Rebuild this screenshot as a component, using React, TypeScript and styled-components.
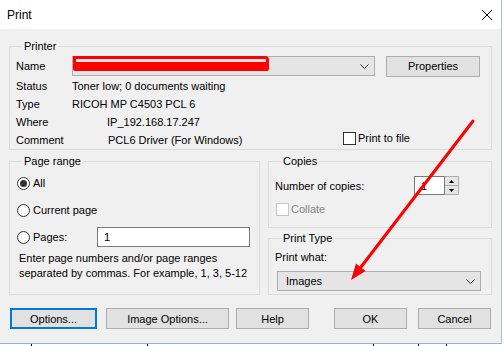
import React from "react";
import styled, { createGlobalStyle } from "styled-components";

const GlobalStyle = createGlobalStyle`
  html, body {
    margin: 0;
    padding: 0;
    background: #fff;
  }
  body {
    font-family: "Liberation Sans", Arial, sans-serif;
    font-size: 11px;
    color: #000;
  }
`;

const Page = styled.div`
  position: relative;
  width: 504px;
  height: 346px;
  overflow: hidden;
`;

const Window = styled.div`
  width: 501px;
  height: 343px;
  border-right: 1px solid #a8bfd8;
  border-bottom: 1px solid #8eb3df;
  display: flex;
  flex-direction: column;
`;

const TitleBar = styled.div`
  height: 29px;
  flex: none;
  background: #fff;
  display: flex;
  align-items: center;
  justify-content: space-between;
  padding: 0 9px 0 7px;
  font-size: 12px;
`;

const Body = styled.div`
  flex: 1;
  background: #f0f0f0;
  padding: 10px 9px 0;
  display: flex;
  flex-direction: column;
`;

const Group = styled.fieldset<{ $pad: string }>`
  margin: 0;
  padding: ${(p) => p.$pad};
  border: 1px solid #dcdcdc;
  min-width: 0;
  box-sizing: border-box;
`;

const Legend = styled.legend`
  padding: 0 2px;
  margin-left: 6px;
  line-height: 15px;
`;

const Row = styled.div<{ $h?: number; $mb?: number; $mt?: number }>`
  display: flex;
  align-items: center;
  height: ${(p) => p.$h ?? 18}px;
  margin-bottom: ${(p) => p.$mb ?? 0}px;
  margin-top: ${(p) => p.$mt ?? 0}px;
`;

const Label = styled.span<{ $w?: number; $ml?: number }>`
  flex: none;
  width: ${(p) => (p.$w ? `${p.$w}px` : "auto")};
  margin-left: ${(p) => p.$ml ?? 0}px;
  white-space: nowrap;
`;

const Combo = styled.div<{ $w: number; $ml?: number }>`
  width: ${(p) => p.$w}px;
  margin-left: ${(p) => p.$ml ?? 0}px;
  height: 20px;
  box-sizing: border-box;
  background: #e5e5e5;
  border: 1px solid #adadad;
  display: flex;
  align-items: center;
  justify-content: space-between;
  padding: 0 5px 0 8px;
`;

const Button = styled.div<{ $w: number; $ml: number; $focus?: boolean }>`
  width: ${(p) => p.$w}px;
  margin-left: ${(p) => p.$ml}px;
  height: 21px;
  box-sizing: border-box;
  background: #e1e1e1;
  border: ${(p) => (p.$focus ? "2px solid #0078d7" : "1px solid #adadad")};
  display: flex;
  align-items: center;
  justify-content: center;
  flex: none;
`;

const CheckBox = styled.span<{ $disabled?: boolean }>`
  width: 13px;
  height: 13px;
  box-sizing: border-box;
  border: 1px solid ${(p) => (p.$disabled ? "#c4c4c4" : "#333")};
  background: #fff;
  flex: none;
`;

const CheckItem = styled.div<{ $ml?: number; $lift?: number; $disabled?: boolean }>`
  display: flex;
  align-items: center;
  gap: 2px;
  margin-left: ${(p) => p.$ml ?? 0}px;
  margin-bottom: ${(p) => p.$lift ?? 0}px;
  color: ${(p) => (p.$disabled ? "#838383" : "#000")};
`;

const Radio = styled.span<{ $on?: boolean }>`
  width: 13px;
  height: 13px;
  box-sizing: border-box;
  border: 1px solid #333;
  border-radius: 50%;
  background: #fff;
  flex: none;
  display: flex;
  align-items: center;
  justify-content: center;
  margin-left: 1px;
  margin-right: 3px;

  &::after {
    content: "";
    width: 7px;
    height: 7px;
    border-radius: 50%;
    background: ${(p) => (p.$on ? "#333" : "transparent")};
  }
`;

const RadioList = styled.div`
  display: flex;
  flex-direction: column;
  gap: 7px;
`;

const TextBox = styled.div<{ $w: number }>`
  width: ${(p) => p.$w}px;
  height: 20px;
  box-sizing: border-box;
  margin-left: auto;
  border: 1px solid #7a7a7a;
  background: #fff;
  display: flex;
  align-items: center;
  padding-left: 6px;
`;

const HelpText = styled.div`
  margin-top: 4px;
  padding-left: 3px;
  line-height: 15px;
`;

const Lower = styled.div`
  margin-top: 4px;
  display: grid;
  grid-template-columns: 251px 224px;
  column-gap: 8px;
`;

const RightColumn = styled.div`
  display: flex;
  flex-direction: column;
  gap: 3px;
`;

const Spinner = styled.div`
  display: flex;
  height: 19px;
`;

const SpinText = styled.div`
  width: 31px;
  box-sizing: border-box;
  border: 1px solid #7a7a7a;
  background: #fff;
  padding-left: 6px;
  display: flex;
  align-items: center;
`;

const SpinArrows = styled.div`
  width: 14px;
  box-sizing: border-box;
  border: 1px solid #adadad;
  border-left: none;
  display: flex;
  flex-direction: column;
`;

const SpinHalf = styled.div<{ $down?: boolean }>`
  flex: 1;
  background: #e5e5e5;
  display: flex;
  align-items: center;
  justify-content: center;
  border-top: ${(p) => (p.$down ? "1px solid #adadad" : "none")};
`;

const ButtonRow = styled.div`
  margin-top: 13px;
  display: flex;
`;

const TickStrip = styled.div`
  display: flex;
  height: 2px;
`;

const Tick = styled.span<{ $ml: number }>`
  width: 1px;
  height: 2px;
  background: #000;
  margin-left: ${(p) => p.$ml}px;
`;

const Overlay = styled.svg`
  position: absolute;
  left: 0;
  top: 0;
  pointer-events: none;
`;

const Chevron = () => (
  <svg width="9" height="5" viewBox="0 0 9 5">
    <path d="M0.5 0.5 L4.5 4.5 L8.5 0.5" fill="none" stroke="#333" strokeWidth="1" />
  </svg>
);

const Tri = ({ down }: { down?: boolean }) => (
  <svg width="5" height="3" viewBox="0 0 5 3">
    <path d={down ? "M0 0 H5 L2.5 3 Z" : "M0 3 H5 L2.5 0 Z"} fill="#000" />
  </svg>
);

export default function App() {
  return (
    <>
      <GlobalStyle />
      <Page>
        <Window>
          <TitleBar>
            <span>Print</span>
            <svg width="10" height="10" viewBox="0 0 10 10">
              <path d="M0 0 L10 10 M10 0 L0 10" stroke="#000" strokeWidth="1" />
            </svg>
          </TitleBar>
          <Body>
            <Group $pad="2px 11px 0 6px">
              <Legend>Printer</Legend>
              <Row $h={20} $mb={1}>
                <Label $w={56}>Name</Label>
                <Combo $w={303}>
                  <span />
                  <Chevron />
                </Combo>
                <Button $w={94} $ml={11}>Properties</Button>
              </Row>
              <Row>
                <Label $w={56}>Status</Label>
                <Label>Toner low; 0 documents waiting</Label>
              </Row>
              <Row>
                <Label $w={56}>Type</Label>
                <Label>RICOH MP C4503 PCL 6</Label>
              </Row>
              <Row>
                <Label $w={56}>Where</Label>
                <Label $ml={35}>IP_192.168.17.247</Label>
              </Row>
              <Row>
                <Label $w={56}>Comment</Label>
                <Label $ml={36} $w={235}>PCL6 Driver (For Windows)</Label>
                <CheckItem $lift={4}>
                  <CheckBox />
                  <span>Print to file</span>
                </CheckItem>
              </Row>
            </Group>

            <Lower>
              <Group $pad="4px 9px 0 6px">
                <Legend>Page range</Legend>
                <RadioList>
                  <Row $h={20}>
                    <Radio $on />
                    <span>All</span>
                  </Row>
                  <Row $h={20}>
                    <Radio />
                    <span>Current page</span>
                  </Row>
                  <Row $h={20}>
                    <Radio />
                    <span>Pages:</span>
                    <TextBox $w={153}>1</TextBox>
                  </Row>
                </RadioList>
                <HelpText>
                  Enter page numbers and/or page ranges
                  <br />
                  separated by commas. For example, 1, 3, 5-12
                </HelpText>
              </Group>

              <RightColumn>
                <Group $pad="7px 6px 8px 6px">
                  <Legend>Copies</Legend>
                  <Row $h={19}>
                    <Label $w={139}>Number of copies:</Label>
                    <Spinner>
                      <SpinText>1</SpinText>
                      <SpinArrows>
                        <SpinHalf>
                          <Tri />
                        </SpinHalf>
                        <SpinHalf $down>
                          <Tri down />
                        </SpinHalf>
                      </SpinArrows>
                    </Spinner>
                  </Row>
                  <Row $h={20} $mt={4}>
                    <CheckItem $ml={1} $disabled>
                      <CheckBox $disabled />
                      <span>Collate</span>
                    </CheckItem>
                  </Row>
                </Group>
                <Group $pad="3px 10px 3px 6px">
                  <Legend>Print Type</Legend>
                  <Row $h={16}>
                    <Label>Print what:</Label>
                  </Row>
                  <Row $h={20} $mt={6}>
                    <Combo $w={204} $ml={2}>
                      <span>Images</span>
                      <Chevron />
                    </Combo>
                  </Row>
                </Group>
              </RightColumn>
            </Lower>

            <ButtonRow>
              <Button $w={87} $ml={1} $focus>Options...</Button>
              <Button $w={123} $ml={9}>Image Options...</Button>
              <Button $w={73} $ml={7}>Help</Button>
              <Button $w={73} $ml={25}>OK</Button>
              <Button $w={73} $ml={11}>Cancel</Button>
            </ButtonRow>
          </Body>
        </Window>
        <TickStrip>
          <Tick $ml={31} />
          <Tick $ml={115} />
          <Tick $ml={225} />
          <Tick $ml={44} />
          <Tick $ml={27} />
        </TickStrip>

        <Overlay width="504" height="346" viewBox="0 0 504 346">
          <path d="M74.5 63 V57.5 H265 Q267.5 57.5 267.5 60 V63" fill="none" stroke="#ff0000" strokeWidth="3" />
          <rect x="73" y="62" width="196" height="9" rx="2" fill="#ff0000" />
          <line x1="473" y1="121" x2="361" y2="267" stroke="#ff0000" strokeWidth="3" strokeLinecap="round" />
          <polygon points="351,280 365.6,271 356,263.6" fill="#ff0000" />
        </Overlay>
      </Page>
    </>
  );
}
